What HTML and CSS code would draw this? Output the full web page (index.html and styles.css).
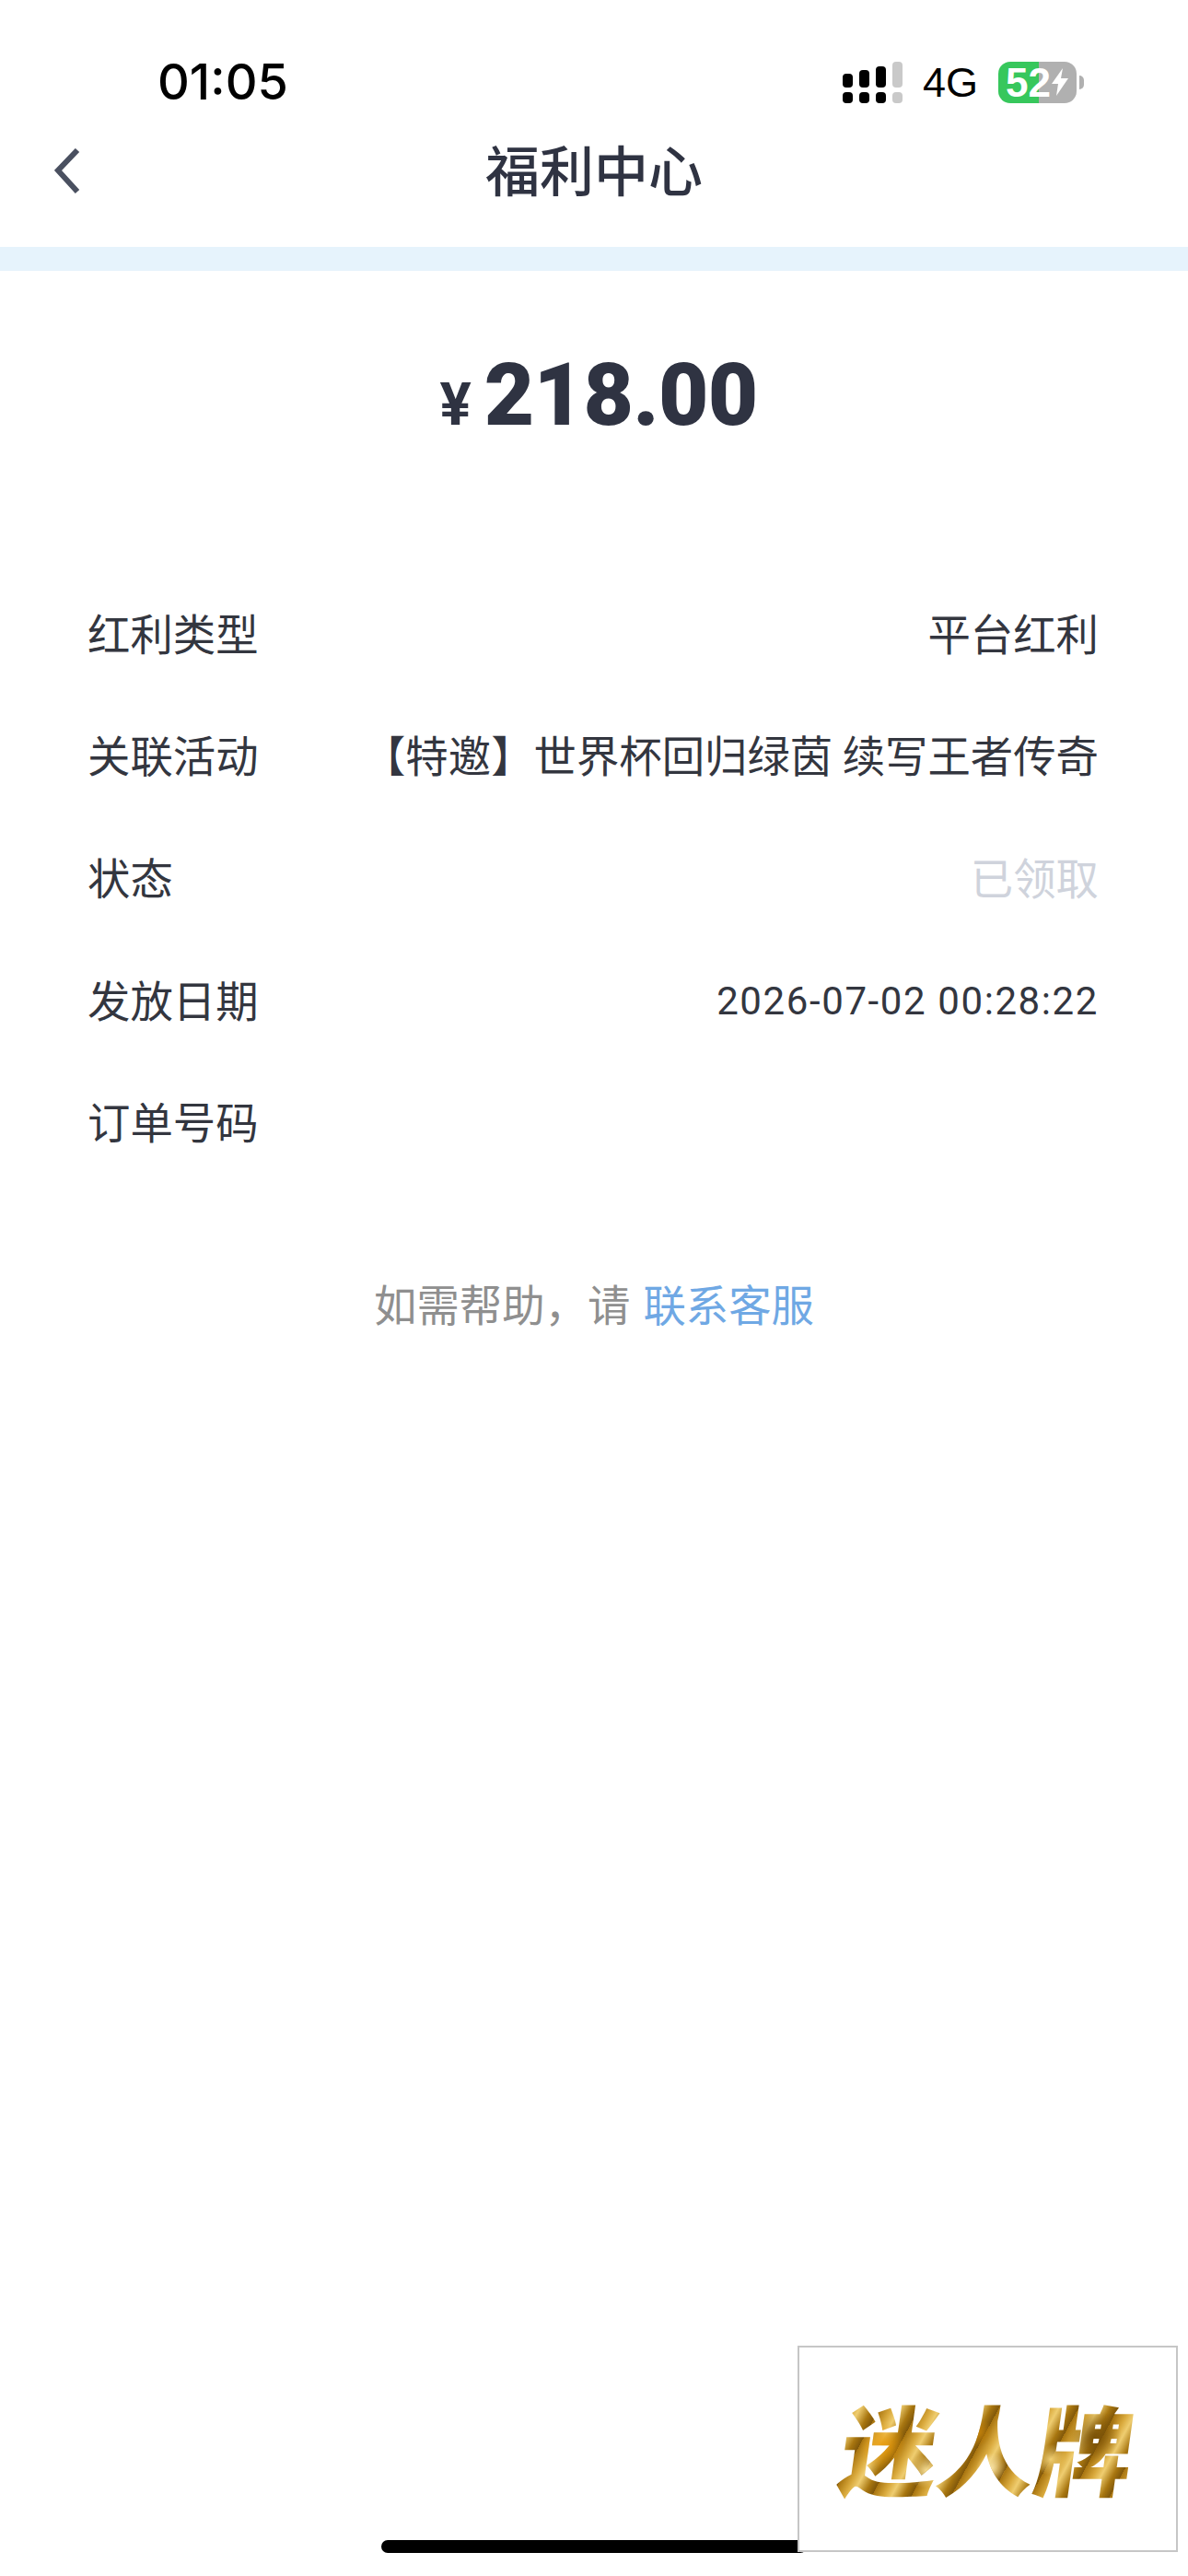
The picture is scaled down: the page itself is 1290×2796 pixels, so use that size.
FILE: index.html
```html
<!DOCTYPE html>
<html lang="zh-CN">

<head>
    <meta charset="UTF-8">
    <meta name="viewport" content="width=device-width, initial-scale=1.0">
    <title>福利中心</title>
    <link rel="stylesheet" href="styles.css">
</head>

<body>
    <div class="page">
        <div class="status-bar">
            <span class="time">01:05</span>
            <div class="status-icons">
                <svg class="signal" width="65" height="45" viewBox="0 0 65 45">
                    <rect x="0" y="13" width="11" height="15" rx="4" />
                    <rect x="18" y="9" width="11" height="19" rx="4" />
                    <rect x="36" y="5" width="11" height="23" rx="4" />
                    <rect class="signal-off" x="54" y="0" width="11" height="28" rx="4" />
                    <rect x="0" y="33" width="11" height="12" rx="4" />
                    <rect x="18" y="33" width="11" height="12" rx="4" />
                    <rect x="36" y="33" width="11" height="12" rx="4" />
                    <rect class="signal-off" x="54" y="33" width="11" height="12" rx="4" />
                </svg>
                <span class="network">4G</span>
                <div class="battery">
                    <span class="battery-level">52</span>
                    <svg width="20" height="30" viewBox="0 0 20 30">
                        <path d="M13 0 L1 17 H8 L6 30 L19 11 H11 Z" fill="#fff" />
                    </svg>
                </div>
            </div>
        </div>

        <div class="nav-bar">
            <svg class="back" width="28" height="50" viewBox="0 0 28 50">
                <path d="M25 2 L4 24 L25 47" fill="none" stroke="#4a5060" stroke-width="6" />
            </svg>
            <h1 class="nav-title">福利中心</h1>
        </div>

        <div class="band"></div>

        <div class="amount">
            <span class="currency">¥</span>
            <span class="value">218.00</span>
        </div>

        <div class="detail-list">
            <div class="detail-row">
                <span>红利类型</span>
                <span>平台红利</span>
            </div>
            <div class="detail-row">
                <span>关联活动</span>
                <span>【特邀】世界杯回归绿茵 续写王者传奇</span>
            </div>
            <div class="detail-row">
                <span>状态</span>
                <span class="muted">已领取</span>
            </div>
            <div class="detail-row">
                <span>发放日期</span>
                <span class="date">2026-07-02 00:28:22</span>
            </div>
            <div class="detail-row">
                <span>订单号码</span>
                <span></span>
            </div>
        </div>

        <p class="help">如需帮助，请<a class="help-link" href="#">联系客服</a></p>

        <div class="home-indicator"></div>
        <div class="watermark"><span class="watermark-text">迷人牌</span></div>
    </div>
</body>

</html>
```

FILE: styles.css
```css
body {
    margin: 0;
    background-color: #fff;
    font-family: "Noto Sans CJK SC", "Noto Sans", sans-serif;
    color: #33363f;
}

.page {
    position: relative;
    width: 1290px;
    height: 2796px;
    overflow: hidden;
    background-color: #fff;
}

.status-bar {
    display: flex;
    justify-content: space-between;
    align-items: center;
    box-sizing: border-box;
    height: 120px;
    padding: 58px 113px 0 171px;
    color: #000;
}

.time {
    font-family: Inter, sans-serif;
    font-size: 54px;
    font-weight: 500;
    line-height: 62px;
}

.status-icons {
    display: flex;
    align-items: center;
}

.signal {
    fill: #000;
}

.signal-off {
    fill: #c9c9c9;
}

.network {
    margin-left: 22px;
    font-family: "Liberation Sans", sans-serif;
    font-size: 45px;
    line-height: 45px;
}

.battery {
    position: relative;
    display: flex;
    align-items: center;
    box-sizing: border-box;
    width: 85px;
    height: 45px;
    margin: 0 8px 0 22px;
    padding-left: 8px;
    border-radius: 13px;
    background: linear-gradient(90deg, #37c75c 0, #37c75c 44px, #b0b0b0 44px);
}

.battery::after {
    content: "";
    position: absolute;
    top: 15px;
    right: -8px;
    width: 5px;
    height: 15px;
    border-radius: 0 5px 5px 0;
    background-color: #b0b0b0;
}

.battery-level {
    font-family: "Liberation Sans", sans-serif;
    font-size: 44px;
    font-weight: 700;
    line-height: 45px;
    color: #fff;
}

.battery svg {
    flex-shrink: 0;
}

.nav-bar {
    position: relative;
    display: flex;
    justify-content: center;
    align-items: center;
    box-sizing: border-box;
    height: 148px;
    padding-bottom: 22px;
}

.back {
    position: absolute;
    top: 41px;
    left: 59px;
}

.nav-title {
    margin: 0;
    font-size: 59px;
    font-weight: 500;
    line-height: 70px;
    color: #2f3342;
}

.band {
    height: 26px;
    background-color: #e6f3fc;
}

.amount {
    display: flex;
    justify-content: center;
    align-items: baseline;
    box-sizing: border-box;
    height: 325px;
    padding: 80px 0 0 10px;
    color: #2f3342;
}

.currency {
    margin-right: 14px;
    font-family: Roboto, sans-serif;
    font-size: 64px;
    font-weight: 700;
}

.value {
    font-family: Roboto, sans-serif;
    font-size: 94px;
    font-weight: 900;
    letter-spacing: -0.7px;
    line-height: 110px;
}

.detail-list {
    padding: 0 97px 0 95px;
}

.detail-row {
    display: flex;
    justify-content: space-between;
    align-items: center;
    height: 132.6px;
    font-size: 46.4px;
}

.muted {
    color: #cfd3dc;
}

.date {
    padding-top: 6px;
    font-family: Roboto, sans-serif;
    font-size: 42px;
    letter-spacing: 1.6px;
}

.help {
    margin: 66px 0 0;
    font-size: 46.4px;
    line-height: 132px;
    text-align: center;
    color: #8f8f8f;
}

.help-link {
    margin-left: 14px;
    color: #6fa8e4;
    text-decoration: none;
}

.home-indicator {
    position: absolute;
    top: 2757px;
    left: 414px;
    width: 462px;
    height: 14px;
    border-radius: 7px;
    background-color: #000;
}

.watermark {
    position: absolute;
    top: 2546px;
    left: 866px;
    display: flex;
    justify-content: center;
    align-items: center;
    box-sizing: border-box;
    width: 413px;
    height: 224px;
    border: 2px solid #c6c6c6;
    padding-bottom: 6px;
    background-color: #fff;
}

.watermark-text {
    font-size: 106px;
    font-weight: 900;
    line-height: 120px;
    transform: skewX(-8deg);
    color: transparent;
    background:
        radial-gradient(circle at 14% 50%, #e89b0c 0, rgba(232, 155, 12, 0) 9%),
        radial-gradient(circle at 30% 72%, #f6dd92 0, rgba(246, 221, 146, 0) 8%),
        radial-gradient(circle at 46% 38%, #c07f0a 0, rgba(192, 127, 10, 0) 8%),
        radial-gradient(circle at 52% 70%, #f8e3a6 0, rgba(248, 227, 166, 0) 9%),
        radial-gradient(circle at 72% 62%, #f0cf73 0, rgba(240, 207, 115, 0) 7%),
        radial-gradient(circle at 86% 42%, #7a5208 0, rgba(122, 82, 8, 0) 10%),
        repeating-linear-gradient(112deg, #a8740f 0, #d9a93c 12px, #efcd70 20px, #a87610 32px, #80570a 40px);
    -webkit-background-clip: text;
    background-clip: text;
}
```
